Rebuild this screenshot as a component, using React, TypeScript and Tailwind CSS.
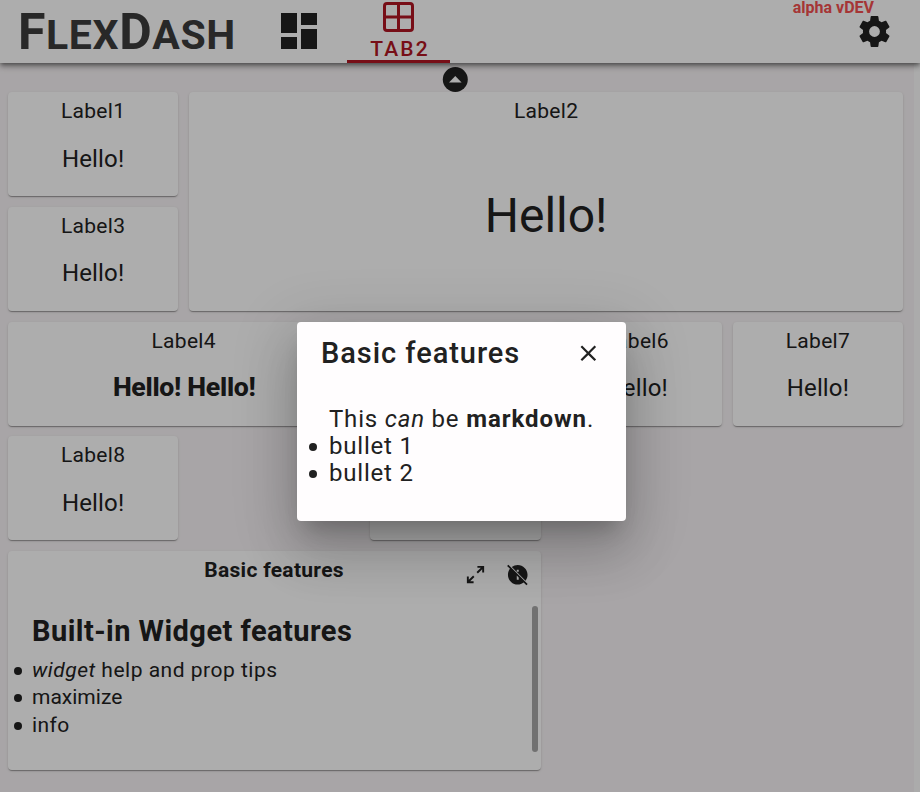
import type { ReactNode } from "react";

type CardProps = {
  label: string;
  value?: ReactNode;
  className?: string;
  valueClass?: string;
};

function Card({ label, value = "Hello!", className = "", valueClass = "text-[24px] pb-[6px] tracking-[0.15px]" }: CardProps) {
  return (
    <section
      className={`flex min-h-0 flex-col items-center rounded bg-white shadow-[0_2px_1px_-1px_rgba(0,0,0,.2),0_1px_1px_rgba(0,0,0,.14),0_1px_3px_rgba(0,0,0,.12)] ${className}`}
    >
      <h2 className="pt-[3px] text-[21px] leading-8 tracking-[0.3px]">{label}</h2>
      <div className={`flex flex-1 items-center ${valueClass}`}>{value}</div>
    </section>
  );
}

function GearIcon() {
  return (
    <svg viewBox="0 0 24 24" className="size-[37px]" fill="currentColor">
      <path d="M12,15.5A3.5,3.5 0 0,1 8.5,12A3.5,3.5 0 0,1 12,8.5A3.5,3.5 0 0,1 15.5,12A3.5,3.5 0 0,1 12,15.5M19.43,12.97C19.47,12.65 19.5,12.33 19.5,12C19.5,11.67 19.47,11.34 19.43,11L21.54,9.37C21.73,9.22 21.78,8.95 21.66,8.73L19.66,5.27C19.54,5.05 19.27,4.96 19.05,5.05L16.56,6.05C16.04,5.66 15.5,5.32 14.87,5.07L14.5,2.42C14.46,2.18 14.25,2 14,2H10C9.75,2 9.54,2.18 9.5,2.42L9.13,5.07C8.5,5.32 7.96,5.66 7.44,6.05L4.95,5.05C4.73,4.96 4.46,5.05 4.34,5.27L2.34,8.73C2.21,8.95 2.27,9.22 2.46,9.37L4.57,11C4.53,11.34 4.5,11.67 4.5,12C4.5,12.33 4.53,12.65 4.57,12.97L2.46,14.63C2.27,14.78 2.21,15.05 2.34,15.27L4.34,18.73C4.46,18.95 4.73,19.03 4.95,18.95L7.44,17.94C7.96,18.34 8.5,18.68 9.13,18.93L9.5,21.58C9.54,21.82 9.75,22 10,22H14C14.25,22 14.46,21.82 14.5,21.58L14.87,18.93C15.5,18.67 16.04,18.34 16.56,17.94L19.05,18.95C19.27,19.03 19.54,18.95 19.66,18.73L21.66,15.27C21.78,15.05 21.73,14.78 21.54,14.63L19.43,12.97Z" />
    </svg>
  );
}

function Header() {
  return (
    <header className="relative z-10 flex h-[63px] items-start bg-white shadow-[0_2px_4px_-1px_rgba(0,0,0,.4),0_4px_5px_rgba(0,0,0,.2),0_1px_10px_rgba(0,0,0,.2)]">
      <h1 className="w-[275px] pt-px pl-[18px] text-[41px] font-bold leading-[62px] tracking-[0.6px] whitespace-nowrap text-[#3c3c3c]">
        <span className="text-[50px]">F</span>LEX<span className="text-[50px]">D</span>ASH
      </h1>
      <svg viewBox="0 0 24 24" className="mt-[7px] size-12" fill="currentColor">
        <path d="M13,3V9H21V3M13,21H21V11H13M3,21H11V15H3M3,13H11V3H3V13Z" />
      </svg>
      <div className="ml-6 flex h-[63px] w-[103px] flex-col items-center border-b-[3px] border-[#b01523] text-[#b01523]">
        <svg viewBox="0 0 31 30" className="mt-[2px] h-[30px] w-[31px] shrink-0" fill="none" stroke="currentColor" strokeWidth="3">
          <rect x="1.5" y="1.5" width="28" height="27" rx="2.5" />
          <path d="M15.5 1V29M1 15H30" />
        </svg>
        <span className="pl-[3px] text-[21px] leading-[35px] font-medium tracking-[2.1px]">TAB2</span>
      </div>
      <div className="ml-auto mr-[27px] flex flex-col items-end">
        <span className="mr-[19px] text-[16px] leading-[15px] font-bold whitespace-nowrap text-[#f44f4f]">alpha vDEV</span>
        <div className="-mt-[2px]">
          <GearIcon />
        </div>
      </div>
    </header>
  );
}

function Bullet({ children, className = "" }: { children: ReactNode; className?: string }) {
  return (
    <li className={`-ml-[18px] flex items-center gap-[10px] ${className}`}>
      <i className="size-2 shrink-0 rounded-full bg-current" />
      <span>{children}</span>
    </li>
  );
}

function FeatureCard() {
  return (
    <section className="col-span-3 row-span-2 flex flex-col rounded bg-white shadow-[0_2px_1px_-1px_rgba(0,0,0,.2),0_1px_1px_rgba(0,0,0,.14),0_1px_3px_rgba(0,0,0,.12)]">
      <div className="flex h-[55px] items-start">
        <h2 className="flex-1 pt-[3px] pl-[76px] text-center text-[21px] leading-8 font-bold tracking-[0.3px]">Basic features</h2>
        <svg viewBox="0 0 24 24" className="mt-3 mr-[19px] size-[23px]" fill="currentColor">
          <path d="M10,21V19H6.41L10.91,14.5L9.5,13.09L5,17.59V14H3V21H10M14.5,10.91L19,6.41V10H21V3H14V5H17.59L13.09,9.5L14.5,10.91Z" />
        </svg>
        <svg viewBox="0 0 24 24" className="mt-3 mr-[11px] size-[23.5px]" fill="currentColor">
          <path d="M22.11 21.46L2.39 1.73L1.11 3L4.06 5.95C2.78 7.63 2 9.72 2 12C2 17.5 6.5 22 12 22C14.28 22 16.37 21.23 18.05 19.94L20.84 22.73L22.11 21.46M13 17H11V12.89L13 14.89V17M5.95 4.06C7.63 2.78 9.72 2 12 2C17.5 2 22 6.5 22 12C22 14.28 21.23 16.37 19.94 18.05L13 11.11V11H12.89L11 9.11V9H13V7H11V9.11L5.95 4.06Z" />
        </svg>
      </div>
      <div className="flex flex-1 pb-[18px] pr-[3px]">
        <div className="flex-1 pl-6">
          <h3 className="pt-[5px] text-[29px] leading-[40px] font-bold tracking-[0.46px]">Built-in Widget features</h3>
          <ul className="mt-[6px] text-[21px] leading-[27.4px]">
            <Bullet className="tracking-[0.5px]"><em>widget</em> help and prop tips</Bullet>
            <Bullet>maximize</Bullet>
            <Bullet className="tracking-[0.4px]">info</Bullet>
          </ul>
        </div>
        <div className="w-[6px] rounded-full bg-[#a7a7a7]" />
      </div>
    </section>
  );
}

function Dialog() {
  return (
    <div className="absolute inset-0 z-20 bg-black/32">
      <div role="dialog" className="absolute top-[322px] left-[297px] h-[199px] w-[329px] rounded bg-[#fffdfe] text-[#212121] shadow-[0_15px_20px_-9px_rgba(0,0,0,.2),0_32px_51px_4px_rgba(0,0,0,.14),0_12px_61px_11px_rgba(0,0,0,.12)]">
        <div className="flex items-center justify-between pt-[10px] pr-6 pl-6">
          <h2 className="text-[29px] leading-[42px] font-medium tracking-[0.95px]">Basic features</h2>
          <svg viewBox="0 0 24 24" className="size-[26.67px]" fill="currentColor">
            <path d="M19,6.41L17.59,5L12,10.59L6.41,5L5,6.41L10.59,12L5,17.59L6.41,19L12,13.41L17.59,19L19,17.59L13.41,12L19,6.41Z" />
          </svg>
        </div>
        <div className="mt-8 pl-8 text-[24px] leading-[27px] tracking-[0.8px] whitespace-nowrap">
          <p>This <em>can</em> be <strong className="tracking-[0.95px]">markdown</strong>.</p>
          <ul>
            <Bullet className="-ml-5! gap-3!">bullet 1</Bullet>
            <Bullet className="-ml-5! gap-3!">bullet 2</Bullet>
          </ul>
        </div>
      </div>
    </div>
  );
}

export default function App() {
  return (
    <div className="relative h-[792px] w-[920px] overflow-hidden bg-[#f8f4f6] font-[Roboto,sans-serif] text-[#212121]">
      <Header />
      <div className="flex h-[729px]">
        <main className="w-[914px] shrink-0 px-2 pt-1">
          <div className="flex h-[25px] w-[894px] justify-center">
            <svg viewBox="0 0 26 26" className="size-[26px]">
              <circle cx="13.300" cy="12.500" r="12.500" fill="#212121" />
              <path d="M7 15.5L13.300 9L19.600 15.500Z" fill="#fff" />
            </svg>
          </div>
          <div className="grid w-[895px] auto-rows-[104px] grid-cols-5 gap-x-[11px] gap-y-[10.75px]">
            <Card label="Label1" />
            <Card label="Label2" className="col-span-4 row-span-2" valueClass="text-[48px] pb-[6px]" />
            <Card label="Label3" />
            <Card label="Label4" className="col-span-2" valueClass="text-[26.67px] font-extrabold pb-2 pl-px tracking-[-0.3px]" value="Hello! Hello!" />
            <Card label="" value="" />
            <Card label="Label6" />
            <Card label="Label7" />
            <Card label="Label8" />
            <Card label="" value="" className="col-start-3" />
            <div className="col-span-2" />
            <FeatureCard />
          </div>
        </main>
        <div className="flex-1 bg-[#fdfdfd]" />
      </div>
      <Dialog />
    </div>
  );
}
